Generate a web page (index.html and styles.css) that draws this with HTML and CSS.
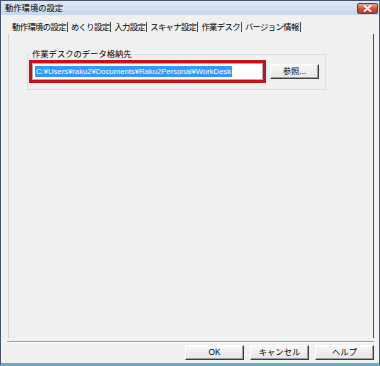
FILE: index.html
```html
<!DOCTYPE html>
<html>
<head lang="ja">
    <meta charset="UTF-8">
    <title>動作環境の設定</title>
    <link rel="stylesheet" href="styles.css">
</head>
<body>
<div class="window">
    <div class="titlebar">
        <span class="title">動作環境の設定</span>
        <span class="close">
            <svg width="9" height="7" viewBox="0 0 9 7">
                <path d="M1.5 1 L7.5 6 M7.5 1 L1.5 6" stroke="#fff" stroke-width="1.8" stroke-linecap="round"/>
            </svg>
        </span>
    </div>
    <div class="tabs">
        <span class="tab">動作環境の設定</span>
        <span class="tab">めくり設定</span>
        <span class="tab">入力設定</span>
        <span class="tab">スキャナ設定</span>
        <span class="tab active">作業デスク</span>
        <span class="tab">バージョン情報</span>
    </div>
    <div class="page">
        <fieldset class="group">
            <legend>作業デスクのデータ格納先</legend>
            <div class="row">
                <div class="mark">
                    <div class="field"><span class="sel">C:¥Users¥raku2¥Documents¥Raku2Personal¥WorkDesk</span></div>
                </div>
                <button class="btn browse">参照...</button>
            </div>
        </fieldset>
    </div>
    <div class="rule"></div>
    <div class="actions">
        <button class="btn">OK</button>
        <button class="btn">キャンセル</button>
        <button class="btn">ヘルプ</button>
    </div>
</div>
</body>
</html>
```

FILE: styles.css
```css
* {
    margin: 0;
    padding: 0;
    box-sizing: border-box;
}

body {
    width: 380px;
    height: 366px;
    font-family: "Liberation Sans", "Noto Sans CJK JP", sans-serif;
    font-size: 8.3px;
    color: #000;
    background: #f0f0f0;
}

.window {
    display: flex;
    flex-direction: column;
    width: 380px;
    height: 366px;
    border: 1px solid #44546a;
    border-bottom: 3px solid #5ab0c2;
    background: #f0f0f0;
}

.titlebar {
    display: flex;
    align-items: center;
    height: 14px;
    padding-left: 4px;
    background: linear-gradient(#dde8f5, #c6d8ec);
}

.title {
    line-height: 12px;
}

.close {
    display: flex;
    align-items: center;
    justify-content: center;
    width: 21px;
    height: 11px;
    margin-left: auto;
    margin-right: 1px;
    border: 1px solid #7a3029;
    border-radius: 2px;
    background: linear-gradient(#e8a89c, #cc4b3a 55%, #c0392b);
}

.tabs {
    display: flex;
    align-items: center;
    height: 19px;
    padding: 5px 0 0 8px;
}

.tab {
    padding: 0 1px 0 3px;
    line-height: 10px;
    letter-spacing: -0.6px;
    border-right: 1px solid #4a4a4a;
}

.page {
    flex: 1;
    margin: 0 5px 0 7px;
    border-left: 1px solid #d0d0d0;
    border-right: 1px solid #4f4f4f;
}

.group {
    width: 298px;
    margin: 15px 0 0 18px;
    padding: 1px 6px 6px 1px;
    border: 1px solid #d5dfe5;
}

.group legend {
    margin-left: 1px;
    padding: 0 2px;
    line-height: 10px;
}

.row {
    display: flex;
    align-items: center;
    gap: 4px;
}

.mark {
    width: 237px;
    height: 23px;
    border: 3px solid #c8101a;
}

.field {
    height: 17px;
    padding: 2px 0 0 2px;
    border: 1px solid #abadb3;
    background: #fff;
}

.sel {
    display: inline-block;
    font-size: 7.7px;
    line-height: 11px;
    padding: 0 1px;
    color: #fff;
    background: #3399ff;
}

.btn {
    width: 59px;
    height: 15px;
    font: inherit;
    line-height: 11px;
    color: #000;
    background: linear-gradient(#f7f7f7, #e6e6e6);
    border: 1px solid;
    border-color: #fff #3c3c3c #3c3c3c #fff;
    box-shadow: inset -1px -1px 0 #a0a0a0;
}

.browse {
    width: 49px;
}

.rule {
    height: 2px;
    margin: 3px 5px 0 6px;
    border-top: 1px solid #a0a0a0;
    border-bottom: 1px solid #fff;
}

.actions {
    display: flex;
    justify-content: flex-end;
    gap: 6px;
    margin: 2px 5px 3px 0;
}
```
